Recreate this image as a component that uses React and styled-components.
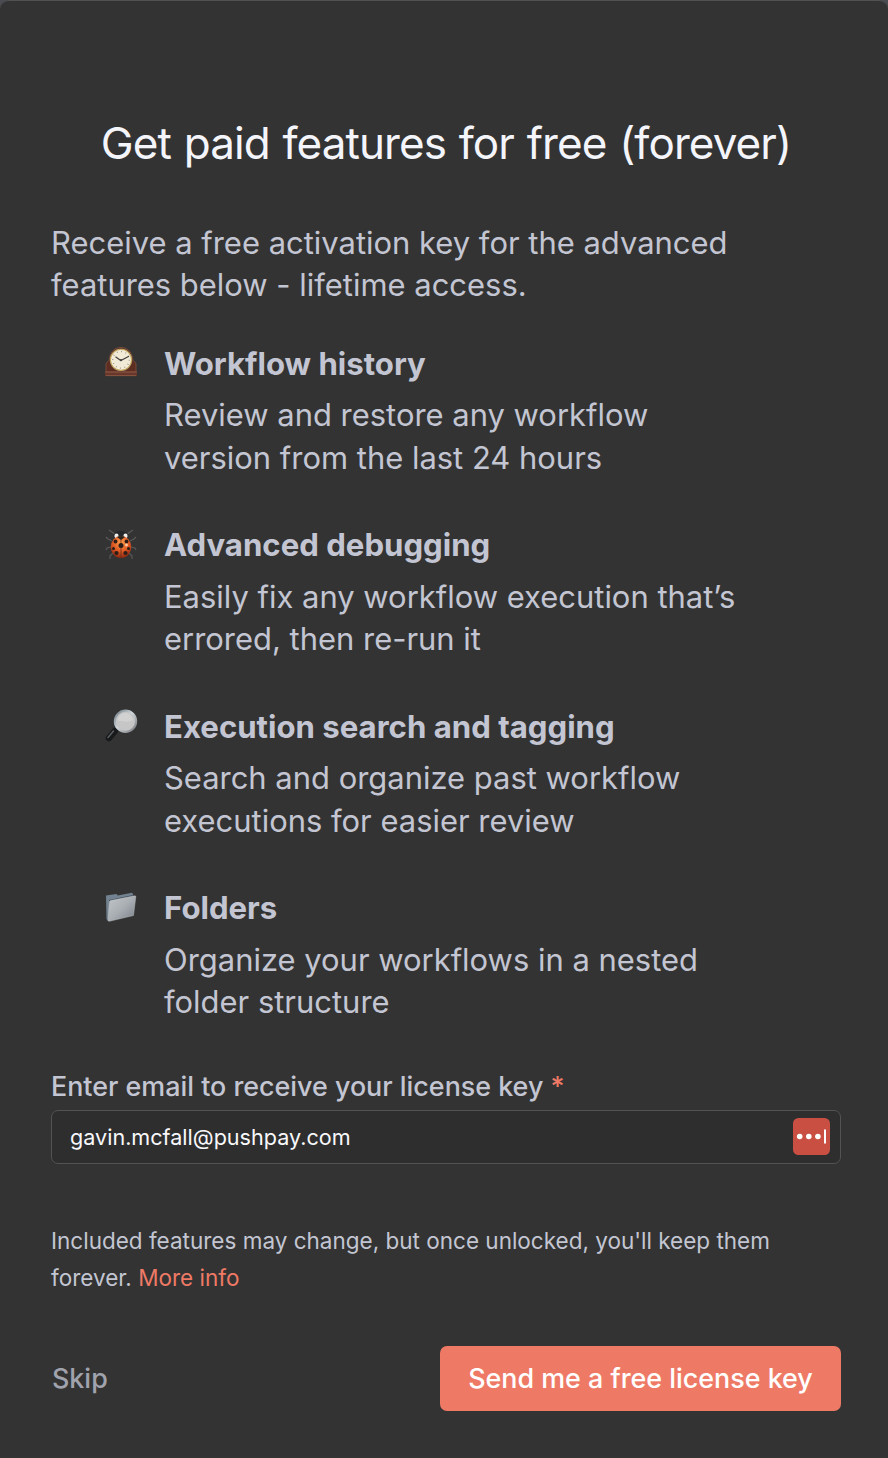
import React from "react";
import styled, { createGlobalStyle } from "styled-components";

const GlobalStyle = createGlobalStyle`
  *, *::before, *::after { box-sizing: border-box; }
  body {
    margin: 0;
    background: #4a4b50;
    font-family: Inter, "Liberation Sans", sans-serif;
    -webkit-font-smoothing: antialiased;
  }
`;

const Dialog = styled.main`
  display: flex;
  flex-direction: column;
  width: 888px;
  height: 1458px;
  padding: 112px 47px 0 51px;
  background: #333333;
  border-top: 1px solid #505153;
  border-radius: 9px 9px 0 0;
  color: #c3c6d2;
  overflow: hidden;
`;

const Title = styled.h1`
  margin: 0;
  font-size: 44px;
  font-weight: 380;
  letter-spacing: -0.92px;
  word-spacing: 1.3px;
  line-height: 60px;
  text-align: center;
  white-space: nowrap;
  color: #f4f5fa;
`;

const Intro = styled.p`
  margin: 48.5px 0 0;
  font-size: 30.95px;
  line-height: 42px;
  white-space: nowrap;
`;

const FeatureList = styled.ul`
  display: flex;
  flex-direction: column;
  gap: 45px;
  margin: 37px 0 0;
  padding: 0 0 0 53px;
  list-style: none;
`;

const Feature = styled.li`
  display: flex;
  align-items: flex-start;
  height: 136.5px;
`;

const Emoji = styled.svg`
  flex: none;
  width: 34px;
  height: 34px;
  margin: 3px 26px 0 0;
`;

const FeatureTitle = styled.h2`
  margin: 0 0 9px;
  font-size: 31.15px;
  font-weight: 700;
  line-height: 42.5px;
  white-space: nowrap;
`;

const FeatureText = styled.p`
  margin: 0;
  font-size: 30.95px;
  line-height: 42.5px;
  white-space: nowrap;
`;

const Label = styled.label`
  margin-top: 44px;
  font-size: 26.87px;
  font-weight: 500;
  line-height: 37px;
  white-space: nowrap;
`;

const Accent = styled.span`
  color: #ee7a66;
`;

const Field = styled.div`
  display: flex;
  align-items: center;
  justify-content: space-between;
  height: 54px;
  margin-top: 5.5px;
  padding: 0 10px 1px 18px;
  background: #2e2e2e;
  border: 1px solid #535353;
  border-radius: 7px;
`;

const Email = styled.span`
  font-size: 21.58px;
  line-height: 30px;
  color: #f8f8fa;
`;

const ManagerIcon = styled.svg`
  flex: none;
  width: 37px;
  height: 37px;
`;

const Note = styled.p`
  margin: 58px 0 0;
  font-size: 22.5px;
  line-height: 37px;
  white-space: nowrap;
`;

const Footer = styled.footer`
  display: flex;
  align-items: center;
  justify-content: space-between;
  margin-top: 50px;
`;

const Button = styled.button`
  width: ${(p) => (p.$primary ? "401px" : "auto")};
  height: 65px;
  padding: 0 1px;
  border: 0;
  border-radius: 7px;
  background: ${(p) => (p.$primary ? "#ee7a66" : "transparent")};
  color: ${(p) => (p.$primary ? "#ffffff" : "#a0a3ad")};
  font-family: inherit;
  font-size: 26.87px;
  font-weight: 500;
  line-height: 37px;
  white-space: nowrap;
`;

const Clock = () => (
  <Emoji viewBox="0 0 34 34">
    <path d="M1 26h32v4H1z" fill="#68372b" />
    <path d="M2 26V18q0-1.500 2-2.500 1.500-1 1.500-4C7 5 11 1.500 17 1.500S27 5 28.500 11.500q0 3 1.500 4 2 1 2 2.500v8z" fill="#5d2d22" stroke="#81503f" strokeWidth=".8" />
    <path d="M1 26h32M2 29.600h30" stroke="#8a5443" />
    <circle cx="17" cy="13.800" r="11.500" fill="#554237" />
    <circle cx="17" cy="13.800" r="10.600" fill="#f0ead7" stroke="#c2a35c" strokeWidth="1.100" />
    <circle cx="17" cy="13.800" r="8.300" fill="none" stroke="#91897a" strokeWidth="1.400" strokeDasharray=".7 3.646" />
    <path d="m11.500 10.700 5.300 3.900 8.200-4.400" fill="none" stroke="#47433e" strokeWidth="1.200" />
    <circle cx="17" cy="14.200" r="1.100" fill="#47433e" />
  </Emoji>
);

const Ladybug = () => (
  <Emoji viewBox="0 0 34 34">
    <defs>
      <radialGradient id="shell" cx=".5" cy=".3" r=".7">
        <stop stopColor="#ff9d4b" />
        <stop offset=".55" stopColor="#df5b25" />
        <stop offset="1" stopColor="#8b260f" />
      </radialGradient>
    </defs>
    <path d="m12 8-4-3-3-2m17 5 4-3 3-2M8 14l-4-2-2-2m24 4 4-2 2-2M7 20l-4 1-1 2m25-3 4 1 1 2M9 26l-3 3v3m19-6 3 3v3" fill="none" stroke="#5a5958" strokeWidth="1.200" />
    <ellipse cx="17" cy="9" rx="7.500" ry="5.300" fill="#24282b" />
    <ellipse cx="12.500" cy="9" rx="2.100" ry="2.400" fill="#eeeeed" />
    <ellipse cx="21.500" cy="9" rx="2.100" ry="2.400" fill="#eeeeed" />
    <ellipse cx="17" cy="20" rx="10.300" ry="11.100" fill="url(#shell)" />
    <path d="M17 10v21" stroke="#652d1c" strokeWidth=".8" />
    <path d="M13 10q4-2 8 0l-4 3z" fill="#272422" />
    <g fill="#2b1d17">
      <circle cx="17" cy="18.500" r="2.500" />
      <circle cx="11.500" cy="14.500" r="1.900" />
      <circle cx="22.500" cy="14.500" r="1.900" />
      <circle cx="9.500" cy="21.500" r="1.500" />
      <circle cx="24.500" cy="21.500" r="1.500" />
      <circle cx="12.500" cy="26" r="2.100" />
      <circle cx="21.500" cy="26" r="2.100" />
    </g>
    <circle cx="22.500" cy="18" r="1.400" fill="#ffcda0" />
  </Emoji>
);

const Magnifier = () => (
  <Emoji viewBox="0 0 34 34">
    <defs>
      <linearGradient id="rim" x1="0" y1="0" x2="1" y2="1">
        <stop stopColor="#697782" />
        <stop offset=".45" stopColor="#d0d6d9" />
        <stop offset="1" stopColor="#74777b" />
      </linearGradient>
    </defs>
    <path d="m14 18-4 5" stroke="#9caab4" strokeWidth="3" />
    <path d="m11 22-6 7" stroke="#17191b" strokeWidth="6.500" strokeLinecap="round" />
    <path d="m9.500 22-5.500 6.500" stroke="#5b6064" strokeWidth="1.400" strokeLinecap="round" />
    <circle cx="21.500" cy="12.300" r="10.600" fill="#c6c6c7" stroke="url(#rim)" strokeWidth="2.200" />
    <path d="M14 12a7.500 7.500 0 0 1 15-1c-4 3-10 1-15 1" fill="#d8d8d8" opacity=".6" />
  </Emoji>
);

const Folder = () => (
  <Emoji viewBox="0 0 34 34">
    <defs>
      <linearGradient id="cover" x1="0" y1="0" x2="1" y2="1">
        <stop stopColor="#c3c7ca" />
        <stop offset=".5" stopColor="#a9aeb3" />
        <stop offset="1" stopColor="#777f87" />
      </linearGradient>
    </defs>
    <path d="M2 5.500 12.500 4l1.200 1.400L28 2.800l1 1.200V25L4 31 2.500 29z" fill="#738290" />
    <path d="m5 10 24-5v20L5 30z" fill="#3e4a55" />
    <path d="m6.500 10.600 24-4.800q1.500-.2 1.300 1.200L29.500 25.500 5.400 31.300q-1.500.2-1.300-1.200l1.200-17.900q.1-1.300 1.200-1.600Z" fill="url(#cover)" stroke="#c8cdd0" strokeWidth=".4" />
  </Emoji>
);

const features = [
  { Icon: Clock, title: "Workflow history", lines: ["Review and restore any workflow", "version from the last 24 hours"] },
  { Icon: Ladybug, title: "Advanced debugging", lines: ["Easily fix any workflow execution that’s", "errored, then re-run it"] },
  { Icon: Magnifier, title: "Execution search and tagging", lines: ["Search and organize past workflow", "executions for easier review"] },
  { Icon: Folder, title: "Folders", lines: ["Organize your workflows in a nested", "folder structure"] },
];

export default function App() {
  return (
    <>
      <GlobalStyle />
      <Dialog>
        <Title>Get paid features for free (forever)</Title>
        <Intro>
          Receive a free activation key for the advanced
          <br />
          features below - lifetime access.
        </Intro>
        <FeatureList>
          {features.map(({ Icon, title, lines }) => (
            <Feature key={title}>
              <Icon />
              <div>
                <FeatureTitle>{title}</FeatureTitle>
                <FeatureText>
                  {lines[0]}
                  <br />
                  {lines[1]}
                </FeatureText>
              </div>
            </Feature>
          ))}
        </FeatureList>
        <Label>
          Enter email to receive your license key <Accent>*</Accent>
        </Label>
        <Field>
          <Email>gavin.mcfall@pushpay.com</Email>
          <ManagerIcon viewBox="0 0 37 37">
            <rect width="37" height="37" rx="5.5" fill="#c94f43" />
            <g fill="#ffffff">
              <circle cx="6.7" cy="18.5" r="2.8" />
              <circle cx="15.8" cy="18.5" r="2.8" />
              <circle cx="24.9" cy="18.5" r="2.8" />
              <rect x="31" y="11.5" width="2" height="14" />
            </g>
          </ManagerIcon>
        </Field>
        <Note>
          Included features may change, but once unlocked, you'll keep them
          <br />
          forever. <Accent>More info</Accent>
        </Note>
        <Footer>
          <Button>Skip</Button>
          <Button $primary>Send me a free license key</Button>
        </Footer>
      </Dialog>
    </>
  );
}
